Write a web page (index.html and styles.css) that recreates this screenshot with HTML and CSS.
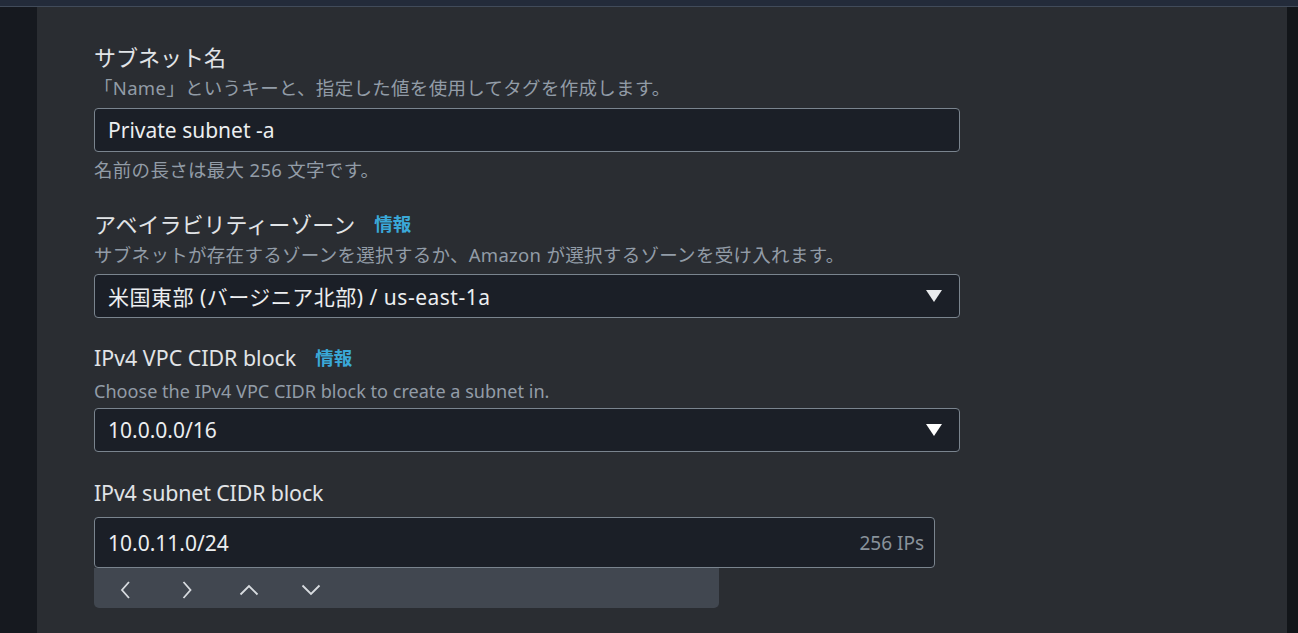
FILE: index.html
```html
<!DOCTYPE html>
<html lang="ja">
<head>
<meta charset="utf-8">
<title>Subnet settings</title>
<link rel="stylesheet" href="styles.css">
</head>
<body>
<div class="topbar"></div>
<div class="main">
  <div class="gutter-left"></div>
  <div class="panel">
    <div class="field">
      <div class="label">サブネット名</div>
      <div class="desc">「Name」というキーと、指定した値を使用してタグを作成します。</div>
      <div class="input"><span class="value">Private subnet -a</span></div>
      <div class="constraint">名前の長さは最大 256 文字です。</div>
    </div>
    <div class="field field-az">
      <div class="label">アベイラビリティーゾーン<a class="info">情報</a></div>
      <div class="desc">サブネットが存在するゾーンを選択するか、Amazon が選択するゾーンを受け入れます。</div>
      <div class="input select"><span class="value value-ja">米国東部 (バージニア北部) / us-east-1a</span>
        <svg class="caret" width="16" height="12" viewBox="0 0 16 12"><path d="M0 0H16L8 12Z" fill="#e9ebed"/></svg>
      </div>
    </div>
    <div class="field field-vpc">
      <div class="label label-en">IPv4 VPC CIDR block<a class="info">情報</a></div>
      <div class="desc desc-en">Choose the IPv4 VPC CIDR block to create a subnet in.</div>
      <div class="input select"><span class="value">10.0.0.0/16</span>
        <svg class="caret" width="16" height="12" viewBox="0 0 16 12"><path d="M0 0H16L8 12Z" fill="#ffffff"/></svg>
      </div>
    </div>
    <div class="field field-cidr">
      <div class="label label-en label-tight">IPv4 subnet CIDR block</div>
      <div class="cidr-wrap">
        <div class="input cidr"><span class="value">10.0.11.0/24</span><span class="suffix">256 IPs</span></div>
        <div class="toolbar">
          <svg class="tb-icon" width="20" height="20" viewBox="0 0 20 20"><path d="M14 2L7 10L14 18" fill="none" stroke="#d8dce0" stroke-width="1.8"/></svg>
          <svg class="tb-icon" width="20" height="20" viewBox="0 0 20 20"><path d="M6.5 2L13.5 10L6.5 18" fill="none" stroke="#d8dce0" stroke-width="1.8"/></svg>
          <svg class="tb-icon" width="20" height="20" viewBox="0 0 20 20"><path d="M1.5 14.5L10 6L18.5 14.5" fill="none" stroke="#d8dce0" stroke-width="1.8"/></svg>
          <svg class="tb-icon" width="20" height="20" viewBox="0 0 20 20"><path d="M1.5 5.5L10 14L18.5 5.5" fill="none" stroke="#d8dce0" stroke-width="1.8"/></svg>
        </div>
      </div>
    </div>
  </div>
  <div class="gutter-right"></div>
</div>
</body>
</html>
```
FILE: styles.css
```css
html, body {
  margin: 0;
  padding: 0;
  height: 100%;
  overflow: hidden;
}
body {
  background: #16191f;
  font-family: "Noto Sans", "Noto Sans CJK JP", sans-serif;
  color: #e3e6e8;
  display: flex;
  flex-direction: column;
}
.topbar {
  height: 6px;
  background: #232b3a;
  border-bottom: 1px solid #414b5a;
  flex: none;
}
.main {
  flex: 1;
  display: flex;
}
.gutter-left {
  width: 37px;
  background: #16191f;
  flex: none;
}
.gutter-right {
  width: 11px;
  background: #121519;
  flex: none;
}
.panel {
  flex: 1;
  background: #2a2d32;
  padding: 36px 0 0 57px;
}
.field {
  display: flex;
  flex-direction: column;
}
.label {
  font-size: 22px;
  line-height: 28px;
  color: #e1e4e7;
  display: flex;
  align-items: center;
}
.label-en {
  font-size: 21.4px;
}
.label-tight {
  letter-spacing: -0.15px;
}
.info {
  color: #3aa8d8;
  font-weight: 700;
  font-size: 18.5px;
  margin-left: 19px;
}
.desc, .constraint {
  font-size: 18.5px;
  line-height: 22px;
  color: #929ca7;
  letter-spacing: 0.3px;
}
.desc-en {
  font-size: 18.1px;
  letter-spacing: 0;
}
.desc {
  margin-top: 6px;
}
.input {
  box-sizing: border-box;
  width: 866px;
  height: 44px;
  margin-top: 9px;
  background: #1b1f27;
  border: 1px solid #7a848e;
  border-radius: 4px;
  display: flex;
  align-items: center;
  padding: 0 17px 0 13px;
}
.field-az .input {
  margin-top: 8px;
}
.field-vpc .desc {
  margin-top: 8px;
}
.field-vpc .input {
  margin-top: 6px;
}
.value {
  font-size: 21px;
  color: #eceef0;
  flex: 1;
  white-space: nowrap;
}
.value-ja {
  letter-spacing: 0.5px;
}
.caret {
  flex: none;
}
.constraint {
  margin-top: 7px;
}
.field-az {
  margin-top: 29px;
}
.field-vpc {
  margin-top: 26px;
}
.field-cidr {
  margin-top: 27px;
}
.cidr-wrap {
  margin-top: 10px;
  display: flex;
  flex-direction: column;
}
.input.cidr {
  margin-top: 0;
  width: 841px;
  height: 51px;
  padding-right: 10px;
}
.suffix {
  font-size: 19px;
  color: #89929b;
}
.toolbar {
  width: 625px;
  height: 40px;
  background: #414750;
  border-radius: 0 0 5px 5px;
  display: flex;
  align-items: center;
  gap: 42px;
  padding: 4px 0 0 21px;
  box-sizing: border-box;
}
.tb-icon {
  flex: none;
}
```
